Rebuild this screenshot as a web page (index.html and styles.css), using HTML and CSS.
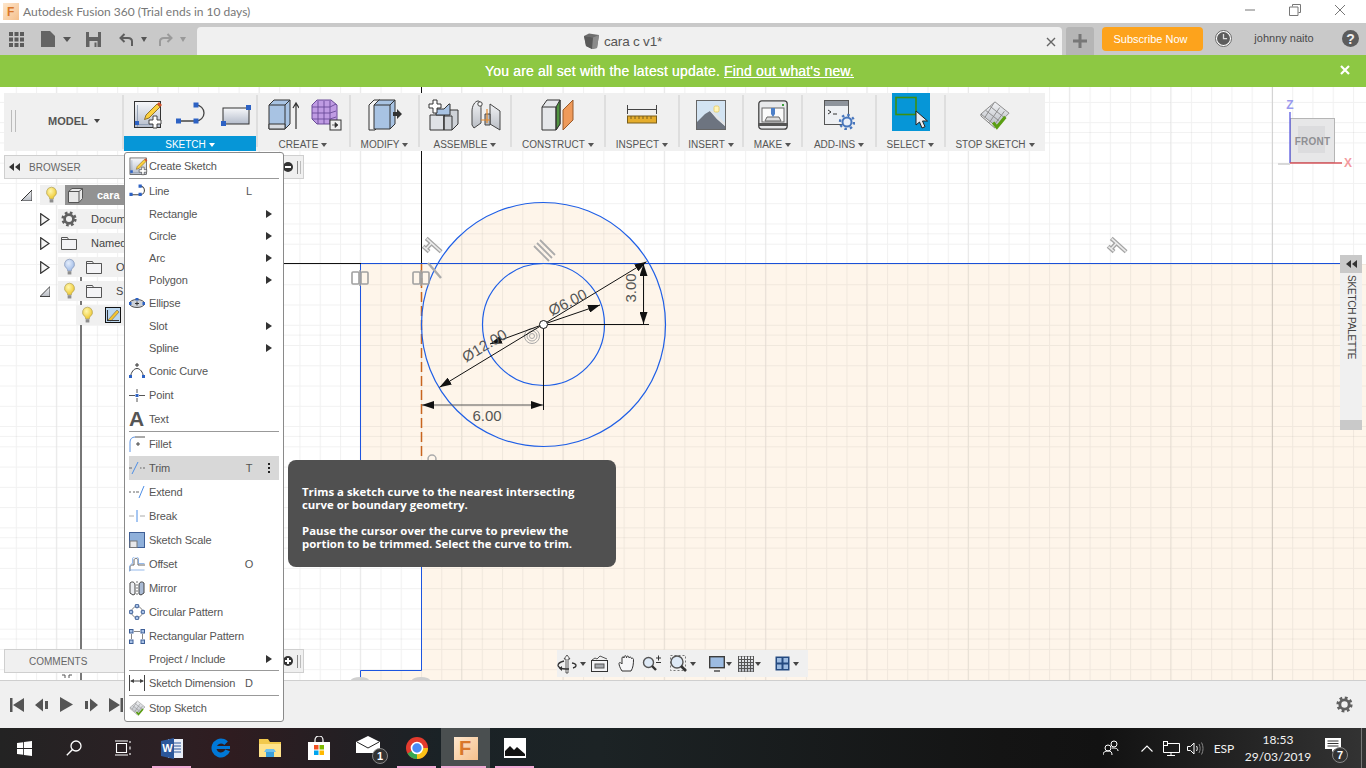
FILE: index.html
```html
<!DOCTYPE html>
<html lang="en">
<head>
<meta charset="utf-8">
<title>Autodesk Fusion 360</title>
<link rel="stylesheet" href="styles.css">
</head>
<body>
<svg class="defs" width="0" height="0" aria-hidden="true">
  <defs>
    <linearGradient id="gPaper" x1="0" y1="0" x2="0" y2="1"><stop offset="0" stop-color="#f7f8fa"/><stop offset="1" stop-color="#b4bccb"/></linearGradient>
    <linearGradient id="gBlue" x1="0" y1="0" x2="0" y2="1"><stop offset="0" stop-color="#c3d6ee"/><stop offset="1" stop-color="#7f9dc6"/></linearGradient>
    <linearGradient id="gGrey" x1="0" y1="0" x2="0" y2="1"><stop offset="0" stop-color="#f2f3f5"/><stop offset="1" stop-color="#b9bdc4"/></linearGradient>
    <linearGradient id="gFus" x1="0" y1="0" x2="1" y2="1"><stop offset="0" stop-color="#fde6cc"/><stop offset="1" stop-color="#f5c08c"/></linearGradient>
    <radialGradient id="gBulb" cx=".4" cy=".35" r=".7"><stop offset="0" stop-color="#fff8b0"/><stop offset="1" stop-color="#eec528"/></radialGradient>
    <radialGradient id="gBulbB" cx=".4" cy=".35" r=".7"><stop offset="0" stop-color="#e4edfb"/><stop offset="1" stop-color="#9db9e6"/></radialGradient>
    <marker id="arr" viewBox="0 0 12 8" refX="12" refY="4" markerWidth="12" markerHeight="8" markerUnits="userSpaceOnUse" orient="auto-start-reverse"><path d="M0 0L12 4L0 8Z" fill="#111"/></marker>
    <symbol id="i-bulb" viewBox="0 0 14 20"><path d="M7 1a5.5 5.5 0 0 0-3 10c.7.6.9 1.500.9 2.500h4.200c0-1 .2-1.900.9-2.500a5.500 5.500 0 0 0-3-10z" fill="url(#gBulb)" stroke="#a99a55" stroke-width=".7"/><path d="M5 14h4v3.500H5z" fill="#8d8d8d"/></symbol>
    <symbol id="i-bulbb" viewBox="0 0 14 20"><path d="M7 1a5.500 5.500 0 0 0-3 10c.7.6.9 1.500.9 2.500h4.200c0-1 .2-1.900.9-2.500a5.500 5.500 0 0 0-3-10z" fill="url(#gBulbB)" stroke="#7f8fb0" stroke-width=".7"/><path d="M5 14h4v3.500H5z" fill="#8d8d8d"/></symbol>
    <symbol id="i-folder" viewBox="0 0 16 14"><path d="M.5 13.500V1.500h6l1 2h8v10z" fill="#f4f4f6" stroke="#555"/><path d="M.5 3.500h15" stroke="#555"/></symbol>
    <symbol id="i-gear" viewBox="0 0 20 20"><circle cx="10" cy="10" r="5.500" fill="none" stroke="#606060" stroke-width="3.400"/><circle cx="10" cy="10" r="8" fill="none" stroke="#606060" stroke-width="3" stroke-dasharray="3.300 3"/></symbol>
    <symbol id="i-sketch" viewBox="0 0 30 30"><rect x="1.500" y="1.500" width="26" height="26" fill="url(#gPaper)" stroke="#333"/><path d="M2 24.500h20M4.500 27V5" stroke="#8795ac" stroke-width=".8" fill="none"/><path d="M13 15L24 4l3 3-11 11-4.500 1.500z" fill="#fbd03f" stroke="#7a5a10" stroke-width=".8"/><path d="M24 4l2-2 3 3-2 2z" fill="#d3532a"/><rect x="2" y="21" width="4" height="4" fill="#2d62c4"/><path d="M16 20h4v-4h4v4h4v4h-4v4h-4v-4h-4z" fill="#fff" stroke="#333" stroke-width=".9"/></symbol>
    <symbol id="i-stop" viewBox="0 0 34 32"><path d="M2 15L17 2l15 12-14 14z" fill="url(#gGrey)" stroke="#888"/><path d="M7 11l14 11M12 7l14 11M16 3L6 19M22 8L11 24M27 12L16 27" stroke="#8a8a8a" fill="none"/><path d="M2 15v2l15 13" fill="none" stroke="#777"/><path d="M15 24l4 5 9-11" fill="none" stroke="#5a9e12" stroke-width="3.400"/></symbol>
    <symbol id="i-cnct" viewBox="0 0 18 16"><rect x="1" y="2" width="7" height="12" rx="1" fill="none" stroke="#a0a0a0" stroke-width="1.600"/><rect x="10" y="2" width="7" height="12" rx="1" fill="none" stroke="#a0a0a0" stroke-width="1.600"/><path d="M9 0v16" stroke="#a0a0a0" stroke-width="1.600"/></symbol>
    <symbol id="i-tang" viewBox="0 0 26 26"><g transform="rotate(42 13 13)" fill="none"><path d="M3 9H23M6 17H14M10 9V17" stroke="#a5a5a5" stroke-width="4.200"/><path d="M3.500 9H22.500M6.500 17H13.500M10 9.500V16.500" stroke="#ececec" stroke-width="1.500"/></g></symbol>
  </defs>
</svg>

<div class="app">
  <header class="titlebar">
    <svg class="ttl-ico" width="16" height="17" viewBox="0 0 16 17"><rect width="16" height="17" fill="url(#gFus)"/><text x="4" y="13" class="svg-f">F</text></svg>
    <span class="ttl-text">Autodesk Fusion 360 (Trial ends in 10 days)</span>
    <div class="win">
      <svg width="12" height="12" viewBox="0 0 12 12"><path d="M1 6h10" stroke="#777"/></svg>
      <svg width="12" height="12" viewBox="0 0 12 12"><path d="M3.500 2.500V.5h8v8h-2M.5 3h8.500v8.500H.5z" fill="none" stroke="#777"/></svg>
      <svg width="12" height="12" viewBox="0 0 12 12"><path d="M1 1l10 10M11 1L1 11" stroke="#777"/></svg>
    </div>
  </header>

  <div class="tabbar">
    <div class="tab-tools">
      <svg class="t-grid" width="15" height="15" viewBox="0 0 15 15"><path d="M0 0h4v4H0zM5.500 0h4v4h-4zM11 0h4v4h-4zM0 5.500h4v4H0zM5.500 5.500h4v4h-4zM11 5.500h4v4h-4zM0 11h4v4H0zM5.500 11h4v4h-4zM11 11h4v4h-4z" fill="#5b5b5b"/></svg>
      <svg class="t-file" width="14" height="16" viewBox="0 0 14 16"><path d="M0 0h9l5 5v11H0z" fill="#646464"/></svg>
      <span class="caret t-c1"></span>
      <svg class="t-save" width="15" height="15" viewBox="0 0 15 15"><path d="M0 0h15v15H0z" fill="#626262"/><path d="M3 0h9v5H3zM3.500 9h8v6h-8z" fill="#c9c9c9"/><path d="M8.500 10.500h2V15h-2z" fill="#626262"/></svg>
      <svg class="t-undo" width="14" height="13" viewBox="0 0 14 13"><path d="M13 13V8.500C13 6 11 5 9 5H2M5.500 1L1.500 5l4 4" fill="none" stroke="#5e5e5e" stroke-width="2"/></svg>
      <span class="caret t-c2"></span>
      <svg class="t-redo" width="14" height="13" viewBox="0 0 14 13"><path d="M1 13V8.500C1 6 3 5 5 5h7M8.500 1l4 4-4 4" fill="none" stroke="#9a9a9a" stroke-width="2"/></svg>
      <span class="caret caret-dim t-c3"></span>
    </div>
    <div class="doc-tab">
      <div class="doc-title">
        <svg width="15" height="16" viewBox="0 0 15 16"><path d="M0 3l5-2.500L15 2l-2 13-5 1-6-3z" fill="#6d6d6d"/><path d="M0 3l9 1.500 6-2.500-2 13-5 1z" fill="#8b8b8b"/><path d="M0 3l9 1.500L8 16l-6-3z" fill="#5a5a5a"/></svg>
        <span>cara c v1*</span>
      </div>
      <svg class="doc-x" width="10" height="10" viewBox="0 0 10 10"><path d="M1 1l8 8M9 1L1 9" stroke="#666" stroke-width="1.400"/></svg>
    </div>
    <div class="new-tab"><svg width="14" height="14" viewBox="0 0 14 14"><path d="M5.500 0h3v5.500H14v3H8.500V14h-3V8.500H0v-3h5.500z" fill="#777"/></svg></div>
    <button class="subscribe">Subscribe Now</button>
    <svg class="t-clock" width="17" height="17" viewBox="0 0 17 17"><circle cx="8.500" cy="8.500" r="8" fill="#fff" stroke="#666"/><circle cx="8.500" cy="8.500" r="6.500" fill="#5d5d5d"/><path d="M8.500 4v4.700h3.600" fill="none" stroke="#ddd" stroke-width="1.300"/></svg>
    <span class="user">johnny naito</span>
    <svg class="t-help" width="17" height="17" viewBox="0 0 17 17"><circle cx="8.500" cy="8.500" r="8.500" fill="#5c5c5c"/><text x="8.500" y="13.500" class="svg-help">?</text></svg>
  </div>

  <div class="banner">
    <p class="banner-msg">You are all set with the latest update. <a href="#">Find out what's new.</a></p>
    <svg class="banner-x" width="10" height="10" viewBox="0 0 10 10"><path d="M1 1l8 8M9 1L1 9" stroke="#fff" stroke-width="2.200"/></svg>
  </div>

  <main class="workspace">
    <svg class="canvas" width="1366" height="593" viewBox="0 87 1366 593">
      <defs>
        <pattern id="gridMinor" x="421" y="264" width="20.26" height="20.26" patternUnits="userSpaceOnUse"><path d="M.5 0v20.260M0 .5h20.260" stroke="#000" stroke-opacity=".055" fill="none"/></pattern>
        <pattern id="gridMajor" x="461" y="132" width="101.300" height="101.300" patternUnits="userSpaceOnUse"><path d="M.5 0v101.300M0 .5h101.300" stroke="#000" stroke-opacity=".05" fill="none"/></pattern>
      </defs>
      <rect x="0" y="87" width="1366" height="593" fill="#fff"/>
      <path d="M361 264H1366V680H421V500H361z" fill="#fef5ea"/>
      <path d="M361 671H421V680H361z" fill="#fef5ea"/>
      <circle cx="543.500" cy="324.500" r="122" fill="#fef5ea"/>
      <rect x="0" y="87" width="1366" height="593" fill="url(#gridMinor)"/>
      <rect x="0" y="87" width="1366" height="593" fill="url(#gridMajor)"/>
      <path d="M1272.500 87V680" stroke="#000" stroke-opacity=".1"/>

      <path d="M81 277V281M81 301V305M81 325V680" stroke="#777" stroke-width="2"/>
      <path d="M284 263.500H361" stroke="#111"/>
      <path d="M421.500 87V264" stroke="#111"/>
      <path d="M361 263.500H1340" stroke="#1a50d8" stroke-width="1.100"/>
      <path d="M360.500 264V500" stroke="#1d55e0"/>
      <path d="M360.500 680V670.500H421.500V500" stroke="#1d55e0" fill="none"/>
      <path d="M421.500 264V460" stroke="#c8641e" stroke-width="1.500" stroke-dasharray="10 4"/>
      <circle cx="543.500" cy="324.500" r="122" fill="none" stroke="#1f5fe6" stroke-width="1.200"/>
      <circle cx="543.500" cy="324.500" r="61" fill="none" stroke="#1f5fe6" stroke-width="1.200"/>

      <g fill="none" stroke="#a8a8a8"><circle cx="532" cy="336" r="7.500"/><circle cx="532" cy="336" r="5"/><circle cx="532" cy="336" r="2.500"/></g>
      <g fill="none" stroke="#111">
        <path d="M439.500 387.300L646.500 261.700" marker-start="url(#arr)" marker-end="url(#arr)"/>
        <path d="M490 344L543 324.500L600 305" marker-start="url(#arr)" marker-end="url(#arr)"/>
        <path d="M548 324.500H649"/>
        <path d="M643.500 264V324" marker-start="url(#arr)" marker-end="url(#arr)"/>
        <path d="M543.500 328V410"/>
        <path d="M422 405H543" stroke="#555" marker-start="url(#arr)" marker-end="url(#arr)"/>
      </g>
      <circle cx="543.500" cy="324.500" r="4" fill="#fff" stroke="#111"/>
      <g class="dim">
        <text transform="translate(487 350) rotate(-31)" text-anchor="middle">Ø12.00</text>
        <text transform="translate(570 307) rotate(-27)" text-anchor="middle">Ø6.00</text>
        <text transform="translate(636 288) rotate(-90)" text-anchor="middle">3.00</text>
        <text x="487" y="421" text-anchor="middle">6.00</text>
      </g>
      <use href="#i-cnct" x="351" y="270" width="18" height="16"/>
      <use href="#i-cnct" x="412" y="270" width="18" height="16"/>
      <use href="#i-tang" x="418" y="235" width="26" height="26"/>
      <use href="#i-tang" x="1103" y="235" width="26" height="26"/>
      <path d="M428 263L441 278" stroke="#ababab" stroke-width="2.400"/>
      <path d="M537 243L552 258M540 240L555 255M534 246L549 261" stroke="#ababab" stroke-width="1.800"/>
      <circle cx="432" cy="459" r="4" fill="none" stroke="#ababab" stroke-width="1.500"/>
      <path d="M351 680a9 3 0 0 1 18 0M412 680a9 3 0 0 1 18 0" fill="#d0d0d0"/>
      <path d="M65 678v-3h-3M69 678v-3h3" stroke="#555" fill="none"/>
    </svg>

    <div class="side">
      <div class="panel-col">
        <div class="panel">
          <span class="dbl-left"></span>
          <span class="panel-title">BROWSER</span>
          <svg class="panel-btn" width="10" height="10" viewBox="0 0 10 10"><circle cx="5" cy="5" r="5" fill="#333"/><path d="M2 4h6v2H2z" fill="#fff"/></svg>
          <span class="panel-grip"></span>
        </div>
        <div class="tree">
          <div class="tree-row r1">
            <svg class="exp" width="11" height="11" viewBox="0 0 11 11"><path d="M0 11L11 0v11z" fill="url(#gGrey)" stroke="#333"/></svg>
            <div class="tree-body">
              <svg class="tb-bulb" width="13" height="19"><use href="#i-bulb"/></svg>
              <div class="tree-head">
                <svg width="15" height="15" viewBox="0 0 15 15"><path d="M.5 3.500L4 .5h10.500v10l-3.500 4H.5z" fill="#e8e8e8" stroke="#555"/><path d="M.5 3.500h10.500v11M11 3.500l3.500-3" fill="none" stroke="#555"/></svg>
                <b>cara</b>
              </div>
            </div>
          </div>
          <div class="tree-row r2">
            <svg class="exp" width="10" height="13" viewBox="0 0 10 13"><path d="M.7.7v11.600L9 6.500z" fill="#f6f6f6" stroke="#333" stroke-width="1.200"/></svg>
            <div class="tree-body">
              <svg class="tb-a" width="16" height="16"><use href="#i-gear"/></svg>
              <span>Docum</span>
            </div>
          </div>
          <div class="tree-row r2">
            <svg class="exp" width="10" height="13" viewBox="0 0 10 13"><path d="M.7.7v11.600L9 6.500z" fill="#f6f6f6" stroke="#333" stroke-width="1.200"/></svg>
            <div class="tree-body">
              <svg class="tb-a" width="16" height="14"><use href="#i-folder"/></svg>
              <span>Named</span>
            </div>
          </div>
          <div class="tree-row r2">
            <svg class="exp" width="10" height="13" viewBox="0 0 10 13"><path d="M.7.7v11.600L9 6.500z" fill="#f6f6f6" stroke="#333" stroke-width="1.200"/></svg>
            <div class="tree-body">
              <svg class="tb-b" width="13" height="19"><use href="#i-bulbb"/></svg>
              <svg class="tb-f" width="16" height="14"><use href="#i-folder"/></svg>
              <span>O</span>
            </div>
          </div>
          <div class="tree-row r2">
            <svg class="exp" width="11" height="11" viewBox="0 0 11 11"><path d="M0 11L11 0v11z" fill="url(#gGrey)" stroke="#333"/></svg>
            <div class="tree-body">
              <svg class="tb-b" width="13" height="19"><use href="#i-bulb"/></svg>
              <svg class="tb-f" width="16" height="14"><use href="#i-folder"/></svg>
              <span>S</span>
            </div>
          </div>
          <div class="tree-row r3">
            <div class="tree-body">
              <svg class="tb-c" width="13" height="19"><use href="#i-bulb"/></svg>
              <svg class="tb-s" width="16" height="16" viewBox="0 0 16 16"><rect x=".5" y=".5" width="15" height="15" fill="#bcd7ef" stroke="#111"/><path d="M3 13L12 3l2 2-8 9z" fill="#f4c330" stroke="#555" stroke-width=".5"/><path d="M2 13.500h12M2.500 14V3" stroke="#333" fill="none"/></svg>
            </div>
          </div>
        </div>
      </div>
      <div class="panel">
        <span class="panel-title panel-title-c">COMMENTS</span>
        <svg class="panel-btn" width="10" height="10" viewBox="0 0 10 10"><circle cx="5" cy="5" r="5" fill="#333"/><path d="M2 4h6v2H2zM4 2h2v6H4z" fill="#fff"/></svg>
        <span class="panel-grip"></span>
      </div>
    </div>

    <nav class="toolbar">
      <div class="tg tg-model">
        <span class="grip"></span>
        <span class="model">MODEL<i class="caret"></i></span>
      </div>
      <div class="tg tg-sketch">
        <div class="tg-icons">
          <svg width="30" height="30"><use href="#i-sketch"/></svg>
          <svg width="32" height="28" viewBox="0 0 32 28"><path d="M3 20H20A8 8 0 0 0 20 4" fill="none" stroke="#444" stroke-width="1.300"/><path d="M0 17.500h5v5H0zM17.500 17.500h5v5h-5zM17.500 1.500h5v5h-5z" fill="#2d62c4"/></svg>
          <svg width="31" height="24" viewBox="0 0 31 24"><rect x="2" y="5" width="26" height="16" fill="url(#gPaper)" stroke="#333"/><path d="M25 2h5v5h-5zM0 18h5v5H0z" fill="#2d62c4"/></svg>
        </div>
        <div class="tg-label on">SKETCH<i class="caret"></i></div>
      </div>
      <div class="tg tg-create">
        <div class="tg-icons">
          <svg width="31" height="32" viewBox="0 0 31 32"><path d="M1 6l5-5h16v24l-5 5H1z" fill="#a8c3e3" stroke="#333"/><path d="M1 6h16v24M17 6l5-5" fill="none" stroke="#333"/><path d="M1 25h16v5H1z" fill="#d7dbe1" stroke="#333"/><path d="M28 30V5M25 9l3-5 3 5" fill="none" stroke="#333" stroke-width="1.200"/></svg>
          <svg width="32" height="32" viewBox="0 0 32 32"><path d="M6 1h14l6 5v19H6l-5-5V6z" fill="#bf9be3" stroke="#6a4b98"/><path d="M1 8h18M1 14h18M1 20h18M7 2v23M13 2v23M19 2v23M19 8l6-3M19 14l6-2M19 20l6-2" stroke="#6a4b98" stroke-width=".9" fill="none"/><rect x="19" y="21" width="11" height="10" fill="#f0f0f0" stroke="#333"/><path d="M21 26h5M24 23.500v5l3-2.500z" fill="#333" stroke="#333" stroke-width=".7"/></svg>
        </div>
        <div class="tg-label">CREATE<i class="caret"></i></div>
      </div>
      <div class="tg tg-modify">
        <div class="tg-icons">
          <svg width="34" height="32" viewBox="0 0 34 32"><path d="M1 6l5-5h6v25l-5 5H1z" fill="#f4f4f4" stroke="#333"/><path d="M6 6l5-5h16v24l-5 5H6z" fill="#a8c3e3" stroke="#333"/><path d="M6 6h16v24M22 6l5-5" fill="none" stroke="#333"/><path d="M25 13h4v-3l5 5-5 5v-3h-4z" fill="#333"/></svg>
        </div>
        <div class="tg-label">MODIFY<i class="caret"></i></div>
      </div>
      <div class="tg tg-assemble">
        <div class="tg-icons">
          <svg width="31" height="32" viewBox="0 0 31 32"><path d="M2 16h14v15H2z" fill="#dfe2e6" stroke="#333"/><path d="M16 17l6-6h8v14l-6 6h-8z" fill="#cfd3d8" stroke="#333"/><path d="M16 31V17h8v14" fill="none" stroke="#333"/><path d="M8 10h8l5-5h1v11H8z" fill="#a8c3e3" stroke="#333"/><path d="M5 1h4v4h4v4H9v5H5V9H1V5h4z" fill="#fff" stroke="#333"/></svg>
          <svg width="30" height="32" viewBox="0 0 30 32"><path d="M1 12c0-5 3-10 6-10s3 4 3 8v14L3 29 1 26z" fill="url(#gGrey)" stroke="#444"/><path d="M29 12L19 5v20l10 6z" fill="url(#gGrey)" stroke="#444"/><path d="M14 15h5v11h-5z" fill="#b9bdc4" stroke="#444"/><circle cx="9" cy="5" r="2.200" fill="#fff" stroke="#444"/><path d="M16 10v14M10 21h9" stroke="#e58a2b" stroke-width="1.200"/></svg>
        </div>
        <div class="tg-label">ASSEMBLE<i class="caret"></i></div>
      </div>
      <div class="tg tg-construct">
        <div class="tg-icons">
          <svg width="34" height="32" viewBox="0 0 34 32"><path d="M1 8l5-7h13v24l-4 6H1z" fill="#e5e7ea" stroke="#333"/><path d="M15 8l4-7v24l-4 6z" fill="#4f9240" stroke="#333"/><path d="M1 8h14v23" fill="none" stroke="#333"/><path d="M22 31V11l10-10v20z" fill="#ef9a5a" stroke="#9a5a2a"/></svg>
        </div>
        <div class="tg-label">CONSTRUCT<i class="caret"></i></div>
      </div>
      <div class="tg tg-inspect">
        <div class="tg-icons">
          <svg width="30" height="19" viewBox="0 0 30 19"><path d="M.5 0v9M29.500 0v9M.5 4.500h29" stroke="#444" fill="none"/><rect x=".5" y="11" width="29" height="7" fill="#e5ad2c" stroke="#7a5e1a"/><path d="M4 11v3M8 11v3M12 11v3M16 11v3M20 11v3M24 11v3" stroke="#7a5e1a"/></svg>
        </div>
        <div class="tg-label">INSPECT<i class="caret"></i></div>
      </div>
      <div class="tg tg-insert">
        <div class="tg-icons">
          <svg width="30" height="30" viewBox="0 0 30 30"><rect x=".5" y=".5" width="29" height="29" fill="#d3e4f3" stroke="#666"/><path d="M1 29v-7l8-8 5-3 7 8 8 7v3z" fill="#6d7480"/><path d="M14 11l7 8 8 7v-3L17 11z" fill="#e2e4e6"/><rect x="18" y="6" width="5" height="6" rx="1.500" fill="#fff4b8" stroke="#e8d070"/></svg>
        </div>
        <div class="tg-label">INSERT<i class="caret"></i></div>
      </div>
      <div class="tg tg-make">
        <div class="tg-icons">
          <svg width="30" height="30" viewBox="0 0 30 30"><rect x=".8" y=".8" width="28.400" height="28.400" rx="3" fill="#e8e9eb" stroke="#444" stroke-width="1.300"/><rect x="4" y="8" width="22" height="14" fill="#fafafa" stroke="#666"/><path d="M0 23h30v3H0z" fill="#555"/><path d="M13 8h4v6l-2 3-2-3z" fill="#4c7fc8"/><path d="M7 21l2-4h12l2 4z" fill="#ddd" stroke="#666"/><rect x="24" y="4" width="2" height="2" fill="#3a9e3a"/></svg>
        </div>
        <div class="tg-label">MAKE<i class="caret"></i></div>
      </div>
      <div class="tg tg-addins">
        <div class="tg-icons">
          <svg width="31" height="30" viewBox="0 0 31 30"><rect x=".5" y=".5" width="24" height="24" fill="#eef0f3" stroke="#555"/><path d="M1 1h23v5H1z" fill="#8e949c"/><path d="M4 10l3 2-3 2M9 14h4" fill="none" stroke="#333"/><circle cx="23" cy="22" r="4.500" fill="#e8eef8" stroke="#4776bd" stroke-width="2"/><circle cx="23" cy="22" r="7" fill="none" stroke="#4776bd" stroke-width="2.400" stroke-dasharray="2.500 3"/></svg>
        </div>
        <div class="tg-label">ADD-INS<i class="caret"></i></div>
      </div>
      <div class="tg tg-select">
        <div class="tg-icons">
          <div class="sel-box">
            <svg width="38" height="38" viewBox="0 0 38 38"><rect x="4" y="4.500" width="20" height="17" fill="none" stroke="#3f8f10" stroke-width="1.600"/><path d="M24 18v14l3.500-3 2.500 6 3-1.300-2.500-5.700h5z" fill="#e7ebf0" stroke="#222"/></svg>
          </div>
        </div>
        <div class="tg-label">SELECT<i class="caret"></i></div>
      </div>
      <div class="tg tg-stop">
        <div class="tg-icons"><svg width="32" height="30"><use href="#i-stop"/></svg></div>
        <div class="tg-label">STOP SKETCH<i class="caret"></i></div>
      </div>
    </nav>

    <div class="navbar">
      <svg width="20" height="20" viewBox="0 0 20 20"><path d="M10 1l3 4h-2v14H9V5H7z" fill="#f8f8f8" stroke="#333" stroke-width=".8"/><path d="M7 7C3 8 1 10 1 11.500S4 15 9 15h3M15 9c3 .5 4 1.500 4 2.500s-1 2-3 2.500" fill="none" stroke="#333" stroke-width="1.300"/><path d="M5 12l-3 2.500L5 17z" fill="#333"/></svg>
      <i class="caret n-c3"></i>
      <svg class="n-m5" width="17" height="17" viewBox="0 0 17 17"><rect x=".5" y="5.500" width="16" height="11" fill="#f4f4f6" stroke="#333"/><rect x="4" y="9" width="9" height="4" fill="#a6a9ae" stroke="#555"/><path d="M1 5l3-2 2 1 3-3 7 3" fill="none" stroke="#555"/></svg>
      <svg class="n-m10" width="17" height="17" viewBox="0 0 17 17"><path d="M4 16C2 13 1 10 1 8.500S3 7.500 4 9V3c0-1.500 2-1.500 2 0-.2-3 2.500-3 2.500-.2C9 0 11 1 11 3c.5-1.500 2.500-1 2.500.5.500-.7 2-.3 2 1C15.500 9 15 13 13 16z" fill="#f6f6f8" stroke="#333"/></svg>
      <svg class="n-m7" width="19" height="17" viewBox="0 0 19 17"><circle cx="6.500" cy="7.500" r="5" fill="#dfeaf6" stroke="#555" stroke-width="1.400"/><path d="M10 11l4 4" stroke="#333" stroke-width="2.400"/><path d="M14 3h5M16.500 .5v5M14 7.500h5" stroke="#333"/></svg>
      <svg class="n-m9" width="17" height="17" viewBox="0 0 17 17"><path d="M.5 .5h15v15H.5z" fill="none" stroke="#777" stroke-dasharray="2 2"/><circle cx="7" cy="7" r="6" fill="#dfeaf6" stroke="#555" stroke-width="1.400"/><path d="M11 11l5 5" stroke="#333" stroke-width="2.600"/></svg>
      <i class="caret n-c3"></i>
      <svg class="n-m13" width="16" height="16" viewBox="0 0 16 16"><rect x=".7" y=".7" width="14.600" height="11" fill="#9dbce2" stroke="#3d3d3d" stroke-width="1.400"/><path d="M5 14h6v2H5z" fill="#777"/></svg>
      <i class="caret n-c1"></i>
      <svg class="n-m6" width="16" height="16" viewBox="0 0 16 16"><rect width="16" height="16" fill="url(#gGrey)"/><path d="M0 3.500h16M0 6.500h16M0 9.500h16M0 12.500h16M3.500 0v16M6.500 0v16M9.500 0v16M12.500 0v16M.5 0v16h15V0H.5z" stroke="#555" fill="none"/></svg>
      <i class="caret n-c1"></i>
      <svg class="n-m14" width="15" height="15" viewBox="0 0 15 15"><rect x=".5" y=".5" width="14" height="14" fill="#244a80"/><path d="M2 2h4.500v4.500H2zM8.500 2H13v4.500H8.500zM2 8.500h4.500V13H2zM8.500 8.500H13V13H8.500z" fill="#9dbce2"/></svg>
      <i class="caret n-c3"></i>
    </div>

    <aside class="palette">
      <div class="pal-top"><span class="dbl-left"></span></div>
      <div class="pal-body"><span class="pal-text">SKETCH PALETTE</span></div>
      <div class="pal-foot"></div>
    </aside>

    <svg class="cube" width="90" height="80" viewBox="0 0 90 80">
      <path d="M2 70H14" stroke="#ccc" stroke-width="1.500"/>
      <rect x="14.500" y="24.500" width="44" height="44" fill="#e7e7e8" stroke="#b5b5b5"/>
      <rect x="22" y="32" width="27" height="27" fill="#dcdcde"/>
      <path d="M14 18V69" stroke="#5a5ae0" stroke-width="1.300"/>
      <path d="M14 69H66" stroke="#d8565c" stroke-width="1.600"/>
      <text x="36.500" y="51" class="cube-front" text-anchor="middle">FRONT</text>
      <text x="14" y="15" class="cube-z" text-anchor="middle">Z</text>
      <text x="72" y="73" class="cube-x" text-anchor="middle">X</text>
    </svg>
  </main>

  <section class="timeline">
    <div class="tl-btns">
      <svg width="14" height="14" viewBox="0 0 14 14"><path d="M0 0h2.500v14H0zM14 0v14L3 7z" fill="#555"/></svg>
      <svg width="14" height="14" viewBox="0 0 14 14"><path d="M0 7l8-6.500v13zM10 3h3v8h-3z" fill="#555"/></svg>
      <svg width="13" height="15" viewBox="0 0 13 15"><path d="M0 0l13 7.500L0 15z" fill="#555"/></svg>
      <svg width="14" height="14" viewBox="0 0 14 14"><path d="M14 7L6 .5v13zM1 3h3v8H1z" fill="#555"/></svg>
      <svg width="14" height="14" viewBox="0 0 14 14"><path d="M14 0h-2.500v14H14zM0 0v14L11 7z" fill="#555"/></svg>
    </div>
    <svg class="tl-gear" width="16" height="16"><use href="#i-gear"/></svg>
  </section>

  <footer class="taskbar">
    <div class="task-apps">
      <div class="task"><svg width="15" height="15" viewBox="0 0 15 15"><path d="M0 2.100L6.200 1.200v5.900H0zM7 1.100L15 0v7.100H7zM0 7.900h6.200v5.900L0 12.900zM7 7.900h8V15l-8-1.100z" fill="#fff"/></svg></div>
      <div class="task"><svg width="16" height="16" viewBox="0 0 16 16"><circle cx="10" cy="6" r="5" fill="none" stroke="#fff" stroke-width="1.300"/><path d="M6.500 9.500L.8 15.200" stroke="#fff" stroke-width="1.400"/></svg></div>
      <div class="task"><svg width="16" height="16" viewBox="0 0 16 16"><path d="M1.500 3.500h10v9h-10zM0 1h13M0 15h13M15 1v2M15 6.500v3M15 13v2" fill="none" stroke="#fff" stroke-width="1.100"/></svg></div>
      <div class="task pink"><svg width="22" height="21" viewBox="0 0 22 21"><path d="M7 1h15v19H7z" fill="#e9eef7"/><path d="M11 5h9M11 8h9M11 11h9M11 14h9" stroke="#2b579a"/><path d="M0 3l13-3v21L0 18z" fill="#2b579a"/><text x="6.500" y="14" class="svg-w" text-anchor="middle">W</text></svg></div>
      <div class="task"><svg width="20" height="20" viewBox="0 0 20 20"><circle cx="10" cy="10" r="7" fill="none" stroke="#0078d7" stroke-width="5" stroke-dasharray="36 8" transform="rotate(20 10 10)"/><path d="M2 9.500h17" stroke="#0078d7" stroke-width="3"/></svg></div>
      <div class="task"><svg width="22" height="20" viewBox="0 0 22 20"><path d="M0 1h9l2 3h11v15H0z" fill="#f2c94c"/><path d="M0 6h22v13H0z" fill="#ffe38a"/><path d="M7 14h8v5H7z" fill="#3aa0dc"/><path d="M5 14h12l-2-3H7z" fill="#6dc0ec"/></svg></div>
      <div class="task"><svg width="22" height="24" viewBox="0 0 22 24"><path d="M0 6h22v18H0z" fill="#fff"/><path d="M7 7V4a4 4 0 0 1 8 0v3" fill="none" stroke="#fff" stroke-width="1.200"/><path d="M6 9h4.500v4.500H6z" fill="#f25022"/><path d="M11.500 9H16v4.500h-4.500z" fill="#7fba00"/><path d="M6 14.500h4.500V19H6z" fill="#00a4ef"/><path d="M11.500 14.500H16V19h-4.500z" fill="#ffb900"/></svg></div>
      <div class="task task-mail"><svg width="24" height="24" viewBox="0 0 24 24"><path d="M0 6l12-6 12 6v11H0z" fill="#fff"/><path d="M1 6l11 6 11-6" fill="none" stroke="#222"/></svg><span class="badge badge-mail">1</span></div>
      <div class="task pink"><svg width="22" height="22" viewBox="0 0 22 22"><circle cx="11" cy="11" r="11" fill="#e33b2e"/><path d="M11 11L1.500 16.500A11 11 0 0 0 11 22c1 0 2 0 3-.5z" fill="#36a852"/><path d="M11 11h11A11 11 0 0 1 11 22z" fill="#fbc116"/><circle cx="11" cy="11" r="5.500" fill="#4a8af4" stroke="#fff" stroke-width="1.600"/></svg></div>
      <div class="task active pink"><svg width="24" height="23" viewBox="0 0 24 23"><rect width="24" height="23" fill="url(#gFus)"/><text x="11" y="18" class="svg-f2" text-anchor="middle">F</text></svg></div>
      <div class="task pink"><svg width="22" height="20" viewBox="0 0 22 20"><rect width="22" height="20" fill="#fff"/><path d="M1 18V13l5-5 4 4 3-3 8 7v2z" fill="#111"/></svg></div>
    </div>
    <div class="tray">
      <span class="tr tr-p"><svg width="16" height="16" viewBox="0 0 16 16"><circle cx="5" cy="8" r="3" fill="none" stroke="#fff"/><circle cx="11" cy="4" r="3" fill="none" stroke="#fff"/><path d="M0 15c0-3 2-4 5-4s4 1 4 4M9 8c3 0 6 0 6 3" fill="none" stroke="#fff"/></svg></span>
      <span class="tr tr-s"><svg width="12" height="7" viewBox="0 0 12 7"><path d="M.5 6.500L6 1l5.500 5.500" fill="none" stroke="#fff" stroke-width="1.100"/></svg></span>
      <span class="tr tr-s"><svg width="17" height="15" viewBox="0 0 17 15"><path d="M4.500 2.500h12v9h-16v-7M8 11.500v3M4 14.500h8" fill="none" stroke="#fff"/><rect x=".5" y=".5" width="4" height="4" fill="#222" stroke="#fff"/></svg></span>
      <span class="tr tr-s"><svg width="17" height="13" viewBox="0 0 17 13"><path d="M.5 4.500h3L7 1v11L3.500 8.500h-3z" fill="none" stroke="#fff"/><path d="M9.500 4c1 1.500 1 3.500 0 5" fill="none" stroke="#fff"/><path d="M12 2c1.500 3 1.500 6 0 9M14.500 .5c2 4 2 8 0 12" fill="none" stroke="#888"/></svg></span>
      <span class="tr tr-l">ESP</span>
      <span class="tr tr-c"><span>18:53</span><span>29/03/2019</span></span>
      <span class="tr tr-n"><svg width="16" height="14" viewBox="0 0 16 14"><path d="M0 0h16v11h-6l-3 3v-3H0z" fill="#fff"/><path d="M2.500 3h11M2.500 5.500h11M2.500 8h11" stroke="#333"/></svg><span class="badge badge-n">7</span></span>
      <span class="tr tr-e"></span>
    </div>
  </footer>

  <div class="menu">
    <div class="mi"><svg width="19" height="19"><use href="#i-sketch"/></svg><span>Create Sketch</span></div>
    <hr>
    <div class="mi"><svg width="18" height="15" viewBox="0 0 32 28"><path d="M3 20H20A8 8 0 0 0 20 4" fill="none" stroke="#444" stroke-width="2"/><path d="M0 16.500h6v6H0zM17 16.500h6v6h-6zM17 1h6v6h-6z" fill="#2d62c4"/></svg><span>Line</span><em>L</em></div>
    <div class="mi mi-s"><i></i><span>Rectangle</span><em></em><b></b></div>
    <div class="mi mi-s"><i></i><span>Circle</span><em></em><b></b></div>
    <div class="mi mi-s"><i></i><span>Arc</span><em></em><b></b></div>
    <div class="mi mi-s"><i></i><span>Polygon</span><em></em><b></b></div>
    <div class="mi"><svg width="16" height="11" viewBox="0 0 16 11"><ellipse cx="8" cy="5.500" rx="7.500" ry="4" fill="#ced2d8" stroke="#555"/><path d="M6 5.500h4M8 3.500v4" stroke="#333"/><path d="M6.500 0h3v2.500h-3zM0 4h2.500v3H0zM13.500 4H16v3h-2.500z" fill="#2d62c4"/></svg><span>Ellipse</span></div>
    <div class="mi mi-s"><i></i><span>Slot</span><em></em><b></b></div>
    <div class="mi mi-s"><i></i><span>Spline</span><em></em><b></b></div>
    <div class="mi"><svg width="16" height="16" viewBox="0 0 16 16"><path d="M1.500 14C2 9 5 5.500 8 5.500s6 3.500 6.500 8.500" fill="none" stroke="#444"/><path d="M0 12h3v3H0zM13 12h3v3h-3z" fill="#2d62c4"/><path d="M6 2h4M8 0v4" stroke="#333"/></svg><span>Conic Curve</span></div>
    <div class="mi"><svg width="16" height="13" viewBox="0 0 16 13"><path d="M0 6.500h6M10 6.500h6M8 0v4M8 9v4" stroke="#555"/><rect x="6.500" y="5" width="3" height="3" fill="#2d62c4"/></svg><span>Point</span></div>
    <div class="mi"><span class="big-a">A</span><span>Text</span></div>
    <hr>
    <div class="mi"><svg width="16" height="16" viewBox="0 0 16 16"><path d="M1 16V6c0-3 2-5 5-5" fill="none" stroke="#5d93e2"/><path d="M6 1h10M1 16" stroke="#555"/><path d="M7 8h4M9 6v4" stroke="#333" stroke-width=".9"/></svg><span>Fillet</span></div>
    <div class="mi mi-on"><svg width="16" height="14" viewBox="0 0 16 14"><path d="M0 7h3M11 7h1.500M14 7h2" stroke="#666"/><path d="M3 13L9 1" stroke="#4d8ee6"/></svg><span>Trim</span><em>T</em><u></u></div>
    <div class="mi"><svg width="16" height="14" viewBox="0 0 16 14"><path d="M0 7h2M4 7h2M7 7h3" stroke="#666"/><path d="M10 13L15 1" stroke="#4d8ee6"/></svg><span>Extend</span></div>
    <div class="mi"><svg width="16" height="14" viewBox="0 0 16 14"><path d="M0 7h5M11 7h5" stroke="#aaa"/><path d="M8 1v12" stroke="#4d8ee6"/></svg><span>Break</span></div>
    <div class="mi"><svg width="16" height="16" viewBox="0 0 16 16"><rect x=".5" y=".5" width="15" height="15" fill="#8fb0da" stroke="#3f5f96"/><rect x="1" y="9" width="7" height="6.500" fill="#e8e8ea" stroke="#777"/></svg><span>Sketch Scale</span></div>
    <div class="mi"><svg width="16" height="15" viewBox="0 0 16 15"><path d="M1 14V10c0-1 1-2 2-2h2V3c0-2 4-2 4 0v5h7" fill="none" stroke="#666"/><path d="M.5 13h15M.5 14.500c-1-4 1-8 3-8V2c0-3 6-3 6 0v4.500h6" fill="none" stroke="#7ba8e6" stroke-width=".8"/></svg><span>Offset</span><em>O</em></div>
    <div class="mi"><svg width="16" height="15" viewBox="0 0 16 15"><path d="M1 2c2-2 5-1 5 2v9l-2 1-3-2z" fill="#eceef2" stroke="#444"/><path d="M15 2c-2-2-5-1-5 2v9l2 1 3-2z" fill="#a9bad4" stroke="#444"/><path d="M8 0v15" stroke="#777" stroke-dasharray="2 1"/></svg><span>Mirror</span></div>
    <div class="mi"><svg width="16" height="16" viewBox="0 0 16 16"><circle cx="8" cy="8" r="5.500" fill="none" stroke="#888"/><g fill="#a9c2e6" stroke="#3d5e96"><circle cx="8" cy="2" r="1.900"/><circle cx="14" cy="8" r="1.900"/><circle cx="8" cy="14" r="1.900"/><circle cx="2" cy="8" r="1.900"/></g></svg><span>Circular Pattern</span></div>
    <div class="mi"><svg width="16" height="15" viewBox="0 0 16 15"><path d="M5 2.500h6M2.500 5v5M13.500 5v5" stroke="#888"/><g fill="#a9c2e6" stroke="#3d5e96"><rect x=".5" y=".5" width="3.500" height="3.500"/><rect x="12" y=".5" width="3.500" height="3.500"/><rect x=".5" y="11" width="3.500" height="3.500"/><rect x="12" y="11" width="3.500" height="3.500"/></g></svg><span>Rectangular Pattern</span></div>
    <div class="mi mi-s"><i></i><span>Project / Include</span><em></em><b></b></div>
    <hr>
    <div class="mi"><svg width="16" height="16" viewBox="0 0 16 16"><path d="M.5 0v16M15.500 0v16M2 6h12" stroke="#444" fill="none"/><path d="M1 6l4-2v4zM15 6l-4-2v4z" fill="#444"/></svg><span>Sketch Dimension</span><em>D</em></div>
    <hr>
    <div class="mi"><svg width="17" height="16"><use href="#i-stop"/></svg><span>Stop Sketch</span></div>
  </div>

  <div class="tip">
    <p>Trims a sketch curve to the nearest intersecting<br>curve or boundary geometry.</p>
    <p>Pause the cursor over the curve to preview the<br>portion to be trimmed. Select the curve to trim.</p>
  </div>
</div>
</body>
</html>
```
FILE: styles.css
```css
* { box-sizing: border-box; }
html, body { margin: 0; padding: 0; background: #fff; }
body { font-family: "Liberation Sans", Arial, sans-serif; }
.defs { position: absolute; }
.app { position: relative; width: 1366px; height: 768px; overflow: hidden; display: flex; flex-direction: column; }
svg { display: block; flex: none; }
.caret { display: inline-block; width: 0; height: 0; border-left: 3.5px solid transparent; border-right: 3.5px solid transparent; border-top: 4px solid #444; margin-left: 4px; vertical-align: 2px; }
.caret-dim { border-top-color: #999; }

/* title bar */
.titlebar { height: 23px; flex: none; display: flex; align-items: center; background: #fff; padding-left: 3px; }
.ttl-ico { margin-top: -1px; }
.svg-f { font: bold 12px "Liberation Sans", sans-serif; fill: #d9772a; }
.ttl-text { margin-left: 4px; font: 12px Lato, "Open Sans", sans-serif; color: #777; }
.win { margin-left: auto; display: flex; gap: 33px; padding-right: 20px; margin-top: -3px; }

/* tab bar */
.tabbar { height: 32px; flex: none; background: #c9c9c9; display: flex; align-items: flex-start; }
.tab-tools { width: 197px; height: 32px; display: flex; align-items: center; flex: none; }
.t-grid { margin-left: 9px; }
.t-file { margin-left: 17px; }
.t-c1 { margin-left: 8px; border-top-color: #555; border-left-width: 4px; border-right-width: 4px; border-top-width: 5px; vertical-align: 0; }
.t-save { margin-left: 15px; }
.t-undo { margin-left: 18px; }
.t-c2 { margin-left: 8px; border-top-color: #555; border-top-width: 5px; }
.t-redo { margin-left: 12px; }
.t-c3 { margin-left: 7px; border-top-width: 5px; }
.doc-tab { margin-top: 4px; width: 865px; height: 28px; background: #f0f0f0; border-radius: 4px 4px 0 0; display: flex; align-items: center; position: relative; flex: none; }
.doc-title { display: flex; align-items: center; gap: 5px; margin-left: 387px; font-size: 13.5px; color: #555; letter-spacing: -.2px; }
.doc-x { position: absolute; right: 6px; top: 10px; }
.new-tab { margin: 4px 0 0 4px; width: 28px; height: 28px; background: #b5b5b5; border-radius: 3px 3px 0 0; display: flex; align-items: center; justify-content: center; flex: none; }
.subscribe { margin: 4px 0 0 8px; width: 101px; height: 24px; border: 0; border-radius: 4px; background: #fda31c; color: #fff; font: 11px "Liberation Sans", sans-serif; padding: 0 4px 0 0; flex: none; }
.t-clock { margin: 7px 0 0 12px; }
.user { margin: 9px 0 0 0; width: 104px; text-align: center; font-size: 11px; color: #4a4a4a; flex: none; }
.t-help { margin: 7px 0 0 6px; }
.svg-help { font: bold 14px "Liberation Sans", sans-serif; fill: #f0f0f0; text-anchor: middle; }

/* banner */
.banner { height: 32px; flex: none; background: #8dc843; position: relative; display: flex; align-items: center; justify-content: center; padding-right: 27px; }
.banner-msg { margin: 0 0 1px; color: #fff; font-size: 14px; letter-spacing: .17px; text-shadow: 0 0 .6px #fff; white-space: nowrap; }
.banner-msg a { color: #fff; text-decoration: underline; }
.banner-x { position: absolute; left: 1340px; top: 10px; }

/* workspace */
.workspace { position: relative; height: 593px; flex: none; overflow: hidden; }
.canvas { position: absolute; left: 0; top: 0; }
.dim { font: 15px "Liberation Sans", sans-serif; fill: #555; }

/* toolbar */
.toolbar { position: absolute; left: 4px; top: 6px; width: 1041px; height: 58px; background: #f0f0f0; display: flex; }
.tg { position: relative; display: flex; flex-direction: column; flex: none; }
.tg::after { content: ""; position: absolute; right: -1px; top: 2px; height: 52px; width: 2px; background: #dedede; }
.tg-sketch::after { right: -2px; }
.tg-stop::after, .tg-model::after { display: none; }
.tg-icons { height: 43px; display: flex; align-items: center; justify-content: center; }
.tg-label { height: 15px; line-height: 17px; text-align: center; font-size: 10px; color: #555; white-space: nowrap; }
.tg-label .caret { margin-left: 3px; vertical-align: 1px; border-top-color: #555; }
.tg-label.on { background: #0696d7; color: #fff; }
.tg-label.on .caret { border-top-color: #fff; }
.tg-model { width: 120px; flex-direction: row; align-items: center; border-right: 2px solid #dedede; height: 54px; margin-top: 2px; }
.grip { width: 5px; height: 22px; margin-left: 7px; border-left: 1px solid #bbb; border-right: 1px solid #bbb; margin-top: -2px; }
.model { margin-left: 32px; font-size: 11px; font-weight: bold; color: #555; margin-top: -2px; }
.model .caret { margin-left: 6px; }
.tg-sketch { width: 132px; }
.tg-sketch .tg-icons { gap: 13px; padding-left: 5px; padding-top: 1px; }
.tg-create { width: 94px; }
.tg-create .tg-icons { gap: 12px; padding-left: 5px; }
.tg-modify { width: 69px; }
.tg-assemble { width: 92px; }
.tg-assemble .tg-icons { gap: 12px; padding-right: 1px; }
.tg-construct { width: 94px; }
.tg-inspect { width: 74px; }
.tg-insert { width: 64px; }
.tg-make { width: 59px; }
.tg-addins { width: 74px; }
.tg-select { width: 69px; }
.tg-stop { width: 100px; }
.sel-box { width: 38px; height: 38px; background: #0696d7; margin-top: -5px; }

/* browser column */
.side { position: absolute; left: 4px; top: 68px; width: 300px; height: 518px; display: flex; flex-direction: column; justify-content: space-between; }
.panel { height: 24px; background: #f0f0f0; border: 1px solid #cfcfcf; display: flex; align-items: center; position: relative; flex: none; }
.dbl-left { display: inline-block; width: 11px; height: 8px; position: relative; }
.dbl-left::before, .dbl-left::after { content: ""; position: absolute; top: 0; width: 0; height: 0; border-top: 4px solid transparent; border-bottom: 4px solid transparent; border-right: 5px solid #333; }
.dbl-left::before { left: 0; }
.dbl-left::after { left: 6px; }
.panel > .dbl-left { margin-left: 4px; }
.panel-title { font-size: 10px; color: #666; margin-left: 9px; }
.panel-title-c { margin-left: 24px; }
.panel-btn { position: absolute; left: 278px; top: 6px; }
.panel-grip { position: absolute; left: 292px; top: 5px; width: 4px; height: 13px; border-left: 1px solid #888; border-right: 1px solid #bbb; }
.tree { display: flex; flex-direction: column; gap: 4px; padding-top: 6px; }
.tree-row { display: flex; align-items: center; height: 20px; font-size: 11px; color: #444; }
.r1 { padding-left: 17px; }
.r1 .exp { margin-right: 8px; }
.r2 { padding-left: 36px; }
.r2 .exp { margin-right: 8px; width: 10px; }
.r3 { padding-left: 72px; }
.tree-body { width: 82px; height: 20px; background: #f0f0f0; display: flex; align-items: center; white-space: nowrap; overflow: hidden; flex: none; }
.r1 .tree-body { width: 90px; }
.r2 .tree-body { width: 80px; }
.r3 .tree-body { width: 60px; }
.tb-bulb { margin-left: 5px; }
.tree-head { margin-left: 7px; height: 20px; width: 66px; background: #929292; display: flex; align-items: center; padding-left: 3px; color: #fff; gap: 14px; }
.tb-a { margin: 0 14px 0 3px; }
.tb-b { margin-left: 5px; }
.tb-f { margin: 0 14px 0 10px; }
.tb-c { margin-left: 5px; }
.tb-s { margin-left: 11px; }

/* navbar */
.navbar { position: absolute; left: 557px; top: 563px; width: 251px; height: 27px; background: #f0f0f0; display: flex; align-items: center; }
.navbar .caret { border-top-color: #444; }
.navbar .n-c3 { margin-left: 3px; }
.navbar .n-c1 { margin-left: 1px; }
.n-m5 { margin-left: 5px; }
.n-m6 { margin-left: 6px; }
.n-m7 { margin-left: 7px; }
.n-m9 { margin-left: 9px; }
.n-m10 { margin-left: 10px; }
.n-m13 { margin-left: 13px; }
.n-m14 { margin-left: 14px; }

/* palette */
.palette { position: absolute; left: 1340px; top: 168px; width: 22px; height: 175px; background: #f0f0f0; display: flex; flex-direction: column; }
.pal-top { height: 18px; background: #c9c9c9; display: flex; align-items: center; justify-content: center; flex: none; }
.pal-body { flex: 1; position: relative; }
.pal-text { display: block; writing-mode: vertical-rl; font-size: 10px; letter-spacing: -.2px; color: #444; margin: 2px 0 0 5px; line-height: 12px; white-space: nowrap; }
.pal-foot { height: 10px; background: #c9c9c9; flex: none; }

/* view cube */
.cube { position: absolute; left: 1276px; top: 7px; }
.cube-front { font: bold 10px "Liberation Sans", sans-serif; fill: #8f8f93; letter-spacing: .2px; }
.cube-z { font: bold 12px "Liberation Sans", sans-serif; fill: #9a9aee; }
.cube-x { font: bold 12px "Liberation Sans", sans-serif; fill: #f39a9e; }

/* timeline */
.timeline { height: 49px; flex: none; background: #f0f0f0; border-top: 2px solid #cfcfcf; margin-top: -1px; display: flex; align-items: center; justify-content: space-between; padding: 0 13px 0 10px; }
.tl-btns { display: flex; align-items: center; gap: 11px; }
.tl-gear { width: 17px; height: 17px; }

/* taskbar */
.taskbar { height: 40px; flex: none; display: flex; align-items: stretch; background: linear-gradient(90deg, #232323 0, #2c2024 160px, #2f1c20 230px, #1a2226 440px, #1c2325 600px, #141414 1000px, #121212 1100px, #333 1366px); color: #f2f2f2; }
.task-apps { display: flex; }
.task { width: 49px; display: flex; align-items: center; justify-content: center; position: relative; }
.task.pink::after { content: ""; position: absolute; left: 5px; right: 5px; bottom: 0; height: 2px; background: #f0a8d4; }
.task.active { background: #4a4f50; }
.task.active::after { left: 0; right: 4px; }
.svg-w { font: bold 11px "Liberation Sans", sans-serif; fill: #fff; }
.svg-f2 { font: bold 20px "Liberation Sans", sans-serif; fill: #d9772a; }
.badge { display: flex; align-items: center; justify-content: center; border-radius: 50%; background: #333; border: 1px solid #888; color: #fff; font: bold 11px "Liberation Sans", sans-serif; position: absolute; width: 16px; height: 16px; }
.badge-mail { left: 29px; top: 20px; }
.tray { margin-left: auto; display: flex; width: 274px; }
.tr { display: flex; align-items: center; justify-content: center; position: relative; flex: none; }
.tr-p { width: 43px; padding-right: 6px; }
.tr-s { width: 24px; }
.tr-l { width: 34px; font: 12px Lato, "Open Sans", sans-serif; }
.tr-c { width: 74px; flex-direction: column; font: 12px Lato, "Open Sans", sans-serif; line-height: 17px; }
.tr-n { width: 36px; }
.tr-e { width: 15px; }
.tr-e::before { content: ""; position: absolute; left: 10px; top: 0; bottom: 0; width: 1px; background: #777; }
.badge-n { left: 17px; top: 19px; }
.tr-n svg { margin: -6px 0 0 0; }

/* menu */
.menu { position: absolute; left: 124px; top: 152px; width: 160px; height: 570px; background: #fff; border: 1px solid #8a8a8a; border-radius: 3px; padding: 1px 4px; font-size: 11px; letter-spacing: -.15px; color: #555; }
.menu hr { height: 1px; margin: 0; border: 0; background: #999; }
.mi { height: 24px; display: grid; grid-template-columns: 20px 1fr 18px 21px; align-items: center; }
.mi > span { grid-column: 2; white-space: nowrap; }
.mi > em { grid-column: 3; font-style: normal; text-align: center; font-size: 11px; }
.mi > b { grid-column: 4; justify-self: center; width: 0; height: 0; border-top: 4.500px solid transparent; border-bottom: 4.500px solid transparent; border-left: 6px solid #333; margin-left: 1px; }
.mi > u { grid-column: 4; justify-self: center; width: 2px; height: 2px; background: #222; box-shadow: 0 -4px 0 #222, 0 4px 0 #222; }
.mi-s { height: 22px; }
.mi-on { background: #d8d8d8; }
.big-a { grid-column: 1 !important; font-size: 21px; line-height: 20px; font-weight: bold; color: #555; }

/* tooltip */
.tip { position: absolute; left: 288px; top: 460px; width: 328px; height: 107px; background: #505050; border-radius: 8px; padding: 25px 14px 0; color: #fff; font: bold 11.4px/13px "Open Sans", "Noto Sans", sans-serif; }
.tip p { margin: 0 0 13px; white-space: nowrap; }
```
